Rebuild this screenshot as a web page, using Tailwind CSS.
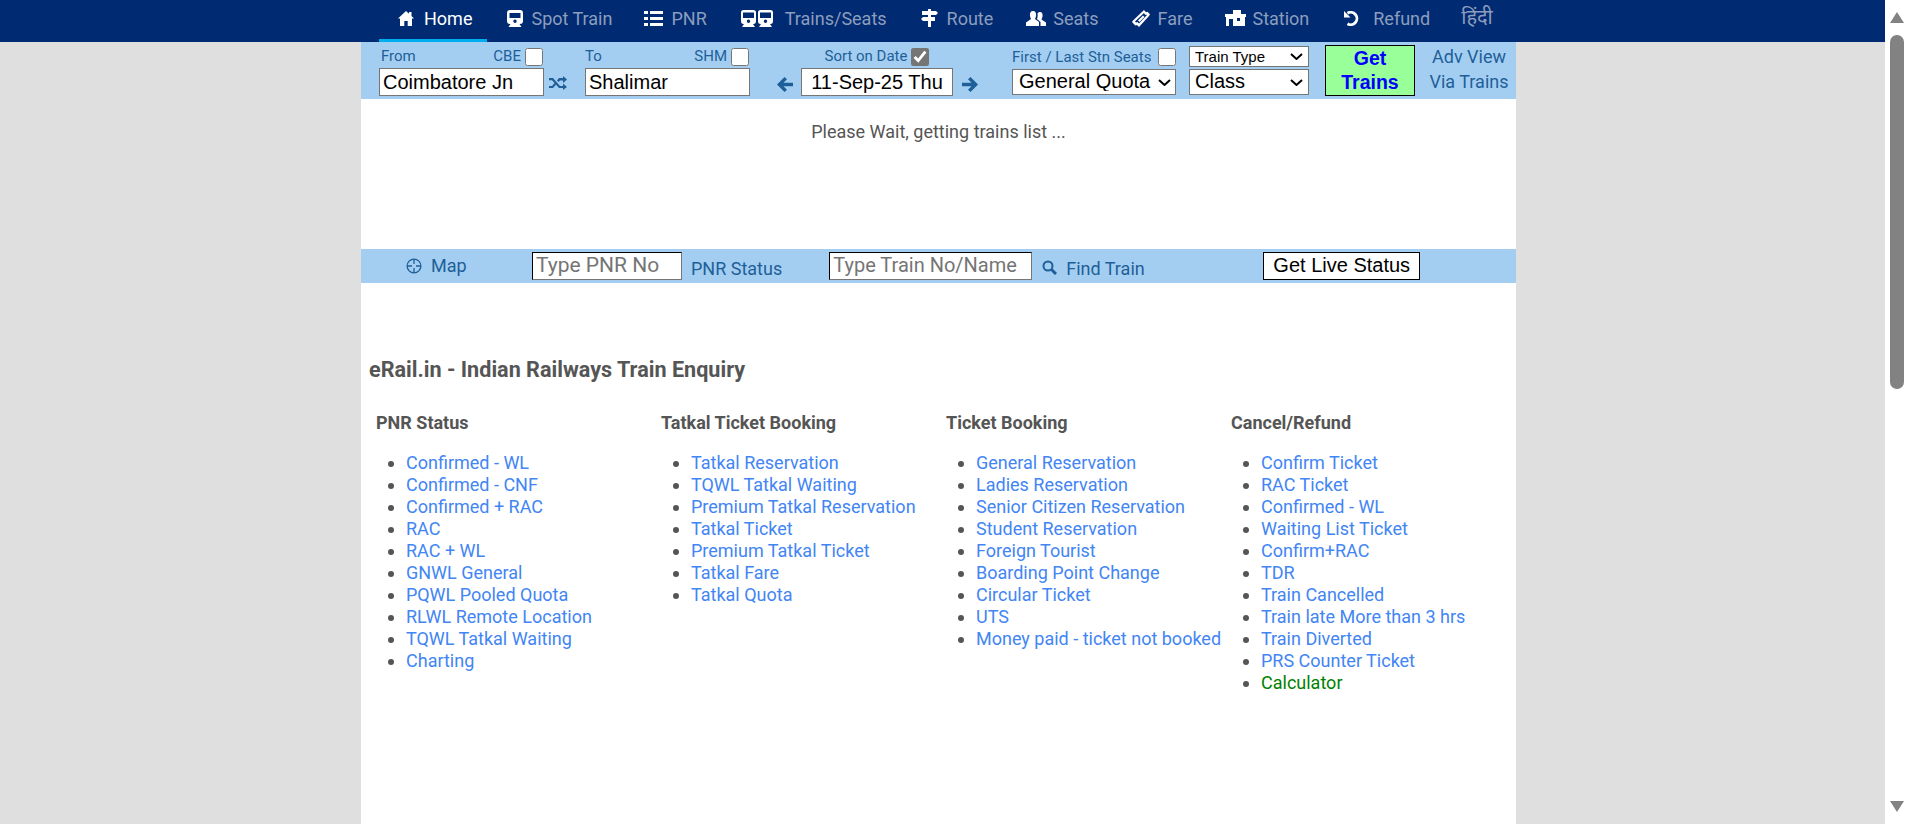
<!DOCTYPE html>
<html lang="en">
  <head>
    <meta charset="UTF-8" />
    <title>eRail.in - Indian Railways Train Enquiry</title>
    <script src="https://cdn.jsdelivr.net/npm/@tailwindcss/browser@4"></script>
  </head>
  <body class="flex h-screen overflow-hidden bg-[#dfdfdf] font-['Roboto',sans-serif] text-[18px] text-[#555555]">
    <div class="w-[1885px] shrink-0">
      <!-- top nav -->
      <nav class="flex h-[42px] bg-[#002b73] pl-[379px] text-[18px] text-[#8d9dbd]">
        <a class="flex h-[42px] items-center gap-[10px] border-b-[3px] border-[#00adef] pb-[3px] pl-[19px] pr-[15px] text-white">
          <svg class="w-[16px] h-[15px]" viewBox="0 0 16 15" fill="#fff"><path d="M8 0 11 2.700V1H13.500V5L16 7.500H14V15H9.700V10H6.300V15H2V7.500H0Z"/></svg>Home</a>
        <a class="flex items-center gap-[8px] pb-[6px] pl-[20px] pr-[15px]">
          <svg class="w-[16px] h-[17px]" viewBox="0 0 16 17" fill="#fff"><path fill-rule="evenodd" d="M3 0H13Q16 0 16 3V11Q16 14 13 14H12.500L14.500 17H1.500L3.500 14H3Q0 14 0 11V3Q0 0 3 0ZM2.500 3V8H13.500V3ZM8 9.500A1.700 1.700 0 1 0 8 12.900 1.700 1.700 0 1 0 8 9.500Z"/></svg>Spot Train</a>
        <a class="flex items-center gap-[8px] pb-[6px] pl-[17px] pr-[17px]">
          <svg class="w-[19px] h-[15px]" viewBox="0 0 19 15" fill="#fff"><path d="M0 0H4V3H0ZM6 0H19V3H6ZM0 6H4V9H0ZM6 6H19V9H6ZM0 12H4V15H0ZM6 12H19V15H6Z"/></svg>PNR</a>
        <a class="flex items-center gap-[12px] pb-[6px] pl-[17px] pr-[17px]">
          <svg class="w-[32px] h-[17px]" viewBox="0 0 32 17" fill="#fff"><path fill-rule="evenodd" d="M2.500 0H12.500Q15 0 15 2.500V11Q15 14 12.500 14H12L14 17H1L3 14H2.500Q0 14 0 11V2.500Q0 0 2.500 0ZM2 2.500V8H13V2.500ZM7.500 9.500A1.700 1.700 0 1 0 7.500 12.900 1.700 1.700 0 1 0 7.500 9.500ZM19.500 0H29.500Q32 0 32 2.500V11Q32 14 29.500 14H29L31 17H18L20 14H19.500Q17 14 17 11V2.500Q17 0 19.500 0ZM19 2.500V8H30V2.500ZM24.500 9.500A1.700 1.700 0 1 0 24.500 12.900 1.700 1.700 0 1 0 24.500 9.500Z"/></svg>Trains/Seats</a>
        <a class="flex items-center gap-[9px] pb-[6px] pl-[17px] pr-[16px]">
          <svg class="w-[17px] h-[18px]" viewBox="0 0 17 18" fill="#fff"><path d="M7 0H10V2H15L17 4 15 6H10V8H14V12H10V18H7V12H2L0 10 2 8H7V6H1V2H7Z"/></svg>Route</a>
        <a class="flex items-center gap-[7px] pb-[6px] pl-[17px] pr-[15px]">
          <svg class="w-[20px] h-[15px]" viewBox="0 0 20 15" fill="#fff"><path d="M7 0C9.500 0 10.500 2 10 5 9.800 6.500 9 7.500 9 8L13 11V15H0V11.500L5 8C5 7.500 4.200 6.500 4 5 3.500 2 4.500 0 7 0ZM14 1C16 1 17 3 16.500 5.500 16.300 7 15.500 8 15.500 8.500L20 11.500V15H14.500V11L11 8C11.500 6.500 12 4 11.500 2.500 12 1.500 13 1 14 1Z"/></svg>Seats</a>
        <a class="flex items-center gap-[8px] pb-[6px] pl-[18px] pr-[16px]">
          <svg class="w-[18px] h-[17px]" viewBox="0 0 18 17" fill="#fff"><path fill-rule="evenodd" d="M12 0 14 2.200 15.500 1.800 18 4.200 17 6 7 17 5 15 3.300 15.500 0 12 1 10.500ZM12 3 3 11.500 4 12.500 5.500 12 7 13.500 15 5 14.500 4.800 13 4.800Z"/><path d="M11 5.500 12.500 7 7.500 12 6 10.500Z"/></svg>Fare</a>
        <a class="flex items-center gap-[6px] pb-[6px] pl-[17px] pr-[16px]">
          <svg class="w-[21px] h-[16px]" viewBox="0 0 21 16" fill="#fff"><path fill-rule="evenodd" d="M8 0H16V4H21V7H20V16H1V7H0V4H8ZM4 9V16H8V9ZM12 8V11H15V8Z"/></svg>Station</a>
        <a class="flex items-center gap-[13px] pb-[6px] pl-[18px] pr-[31px]">
          <svg class="w-[17px] h-[15px]" viewBox="0 0 17 15" fill="none" stroke="#fff" stroke-width="2.800"><path d="M4.500 2.200A6.200 6.200 0 1 1 4.500 12.800"/><path d="M1 0V6.500H7.500" fill="#fff" stroke="none"/></svg>Refund</a>
        <a class="flex items-center pb-[9px] font-['Noto_Sans',sans-serif] text-[20px]">हिंदी</a>
      </nav>

      <main class="ml-[361px] w-[1155px] h-[782px] bg-white">
        <!-- search form -->
        <form class="flex h-[57px] bg-[#a3cef1] text-[15px] text-[#1f5f99]">
          <div class="ml-[18px] w-[165px]">
            <div class="flex h-[26px] items-center justify-between pl-[2px] pr-[1px] pt-[3px]"><span>From</span><span class="flex items-center gap-1">CBE <input type="checkbox" class="w-[18px] h-[18px]" /></span></div>
            <input value="Coimbatore Jn" class="h-[28px] w-[165px] border border-[#767676] bg-white px-[3px] font-['Liberation_Sans',sans-serif] text-[20px] text-black" />
          </div>
          <svg class="ml-[5px] mt-[34px] w-[18px] h-[14px]" viewBox="0 0 18 14" fill="#1f5f99"><path d="M0 2H4L11 10H14V7.500L18 11 14 14V12H10L3 4.300H0ZM0 10H3L6 6.500 7.500 8 4 12H0ZM10 2H14V0L18 3.500 14 7V4.500H11L9.500 6 8 4.500Z"/></svg>
          <div class="ml-[18px] w-[165px]">
            <div class="flex h-[26px] items-center justify-between pr-[1px] pt-[3px]"><span>To</span><span class="flex items-center gap-1">SHM <input type="checkbox" class="w-[18px] h-[18px]" /></span></div>
            <input value="Shalimar" class="h-[28px] w-[165px] border border-[#767676] bg-white px-[3px] font-['Liberation_Sans',sans-serif] text-[20px] text-black" />
          </div>
          <svg class="ml-[27px] mt-[35px] w-[16px] h-[15px]" viewBox="0 0 16 15" fill="#1f5f99"><path d="M7.500 0 10 2.300 6.500 5.700H16V9.300H6.500L10 12.700 7.500 15 0 7.500Z"/></svg>
          <div class="ml-[8px] w-[152px]">
            <div class="flex h-[26px] items-center justify-center gap-1 pt-[3px]"><span>Sort on Date</span><input type="checkbox" checked class="w-[18px] h-[18px] accent-[#757575]" /></div>
            <input value="11-Sep-25 Thu" class="h-[28px] w-[152px] border border-[#767676] bg-white text-center font-['Liberation_Sans',sans-serif] text-[20px] text-black" />
          </div>
          <svg class="ml-[9px] mt-[35px] w-[16px] h-[15px]" viewBox="0 0 16 15" fill="#1f5f99"><path d="M8.500 0 6 2.300 9.500 5.700H0V9.300H9.500L6 12.700 8.500 15 16 7.500Z"/></svg>
          <div class="ml-[34px] w-[164px]">
            <div class="flex h-[27px] items-center justify-between pt-[3px]"><span>First / Last Stn Seats</span><input type="checkbox" class="w-[18px] h-[18px]" /></div>
            <div class="relative">
              <select class="block h-[26px] w-[164px] appearance-none border border-[#767676] bg-white pb-[3px] pl-[6px] font-['Liberation_Sans',sans-serif] text-[20px] leading-[22px] text-black"><option>General Quota</option></select>
              <svg class="pointer-events-none absolute right-[5px] top-[10px] w-[13px] h-[7px]" viewBox="0 0 13 7" fill="none" stroke="#000" stroke-width="2"><path d="M1 1 6.500 6 12 1"/></svg>
            </div>
          </div>
          <div class="ml-[13px] flex w-[120px] flex-col gap-[2px] pt-[4px]">
            <div class="relative">
              <select class="block h-[21px] w-[120px] appearance-none border border-[#767676] bg-white pb-[1px] pl-[5px] font-['Liberation_Sans',sans-serif] text-[15px] leading-[17px] text-black"><option>Train Type</option></select>
              <svg class="pointer-events-none absolute right-[6px] top-[7px] w-[13px] h-[7px]" viewBox="0 0 13 7" fill="none" stroke="#000" stroke-width="2"><path d="M1 1 6.500 6 12 1"/></svg>
            </div>
            <div class="relative">
              <select class="block h-[26px] w-[120px] appearance-none border border-[#767676] bg-white pb-[3px] pl-[5px] font-['Liberation_Sans',sans-serif] text-[20px] leading-[22px] text-black"><option>Class</option></select>
              <svg class="pointer-events-none absolute right-[6px] top-[10px] w-[13px] h-[7px]" viewBox="0 0 13 7" fill="none" stroke="#000" stroke-width="2"><path d="M1 1 6.500 6 12 1"/></svg>
            </div>
          </div>
          <button type="button" class="ml-[16px] mt-[3px] h-[51px] w-[90px] border border-black bg-[#99ff99] pb-[2px] font-['Liberation_Sans',sans-serif] text-[19.5px] leading-[24px] font-bold text-[#0000ff]">Get<br />Trains</button>
          <div class="ml-[15px] flex w-[78px] flex-col items-center whitespace-nowrap pt-[2px] text-[18px] leading-[25px]">
            <div>Adv View</div>
            <div>Via Trains</div>
          </div>
        </form>

        <div class="h-[150px] pt-[21px] text-center text-[18px] leading-[24px]">Please Wait, getting trains list ...</div>

        <!-- quick lookups -->
        <div class="flex h-[34px] bg-[#a3cef1] text-[18px] text-[#1f5f99]">
          <div class="ml-[45px] flex w-[126px] items-center gap-[9px] leading-[24px]">
            <svg class="w-[16px] h-[16px]" viewBox="0 0 16 16" fill="none" stroke="#1f5f99" stroke-width="1.300"><circle cx="8" cy="8" r="6.900"/><path d="M8 1V6M8 10V15M1 8H6M10 8H15"/></svg>Map</div>
          <input placeholder="Type PNR No" class="mt-[3px] h-[28px] w-[150px] border border-[#767676] border-t-black border-l-black bg-white px-[3px] pb-[1px] text-[21px] placeholder:text-[#757575]" />
          <span class="ml-[9px] mt-[8px] leading-[24px]">PNR Status</span>
          <input placeholder="Type Train No/Name" class="ml-[47px] mt-[3px] h-[28px] w-[203px] border border-[#767676] border-t-black border-l-black bg-white px-[3px] pb-[2px] text-[20px] placeholder:text-[#757575]" />
          <svg class="ml-[10px] mt-[11px] w-[15px] h-[15px]" viewBox="0 0 15 15" fill="none" stroke="#1f5f99"><circle cx="6" cy="6" r="4.500" stroke-width="2"/><path d="M9.500 9.500 14 14" stroke-width="3"/></svg>
          <span class="ml-[9px] mt-[8px] w-[197px] leading-[24px]">Find Train</span>
          <button type="button" class="mt-[3px] h-[28px] w-[157px] border border-black bg-white pb-[2px] font-['Liberation_Sans',sans-serif] text-[20px] leading-[22px] text-black">Get Live Status</button>
        </div>

        <h1 class="ml-[8px] mt-[73px] text-[21.6px] leading-[28px] font-bold">eRail.in - Indian Railways Train Enquiry</h1>

        <!-- link columns -->
        <div class="mt-[27px] ml-[15px] grid grid-cols-[285px_285px_285px_285px] text-[#4285f4]">
          <div>
            <h2 class="text-[18px] leading-[24px] font-bold text-[#555555]">PNR Status</h2>
            <ul class="mt-[17px] list-disc pl-[30px] leading-[22px] marker:text-[#555555]">
              <li>Confirmed - WL</li><li>Confirmed - CNF</li><li>Confirmed + RAC</li><li>RAC</li><li>RAC + WL</li><li>GNWL General</li><li>PQWL Pooled Quota</li><li>RLWL Remote Location</li><li>TQWL Tatkal Waiting</li><li>Charting</li>
            </ul>
          </div>
          <div>
            <h2 class="text-[18px] leading-[24px] font-bold text-[#555555]">Tatkal Ticket Booking</h2>
            <ul class="mt-[17px] list-disc pl-[30px] leading-[22px] marker:text-[#555555]">
              <li>Tatkal Reservation</li><li>TQWL Tatkal Waiting</li><li>Premium Tatkal Reservation</li><li>Tatkal Ticket</li><li>Premium Tatkal Ticket</li><li>Tatkal Fare</li><li>Tatkal Quota</li>
            </ul>
          </div>
          <div>
            <h2 class="text-[18px] leading-[24px] font-bold text-[#555555]">Ticket Booking</h2>
            <ul class="mt-[17px] list-disc pl-[30px] leading-[22px] marker:text-[#555555]">
              <li>General Reservation</li><li>Ladies Reservation</li><li>Senior Citizen Reservation</li><li>Student Reservation</li><li>Foreign Tourist</li><li>Boarding Point Change</li><li>Circular Ticket</li><li>UTS</li><li>Money paid - ticket not booked</li>
            </ul>
          </div>
          <div>
            <h2 class="text-[18px] leading-[24px] font-bold text-[#555555]">Cancel/Refund</h2>
            <ul class="mt-[17px] list-disc pl-[30px] leading-[22px] marker:text-[#555555]">
              <li>Confirm Ticket</li><li>RAC Ticket</li><li>Confirmed - WL</li><li>Waiting List Ticket</li><li>Confirm+RAC</li><li>TDR</li><li>Train Cancelled</li><li>Train late More than 3 hrs</li><li>Train Diverted</li><li>PRS Counter Ticket</li><li class="text-[#008000]">Calculator</li>
            </ul>
          </div>
        </div>
      </main>
    </div>

    <!-- scrollbar -->
    <div class="flex h-[824px] w-[23px] flex-col items-center bg-white">
      <svg class="mt-[12px] w-[14px] h-[11px]" viewBox="0 0 14 11" fill="#828282"><path d="M7 0 14 11H0Z"/></svg>
      <div class="mt-[12px] h-[354px] w-[14px] rounded-t-[7px] rounded-b-[7px] bg-[#828282]"></div>
      <svg class="mt-[412px] w-[14px] h-[11px]" viewBox="0 0 14 11" fill="#828282"><path d="M7 11 14 0H0Z"/></svg>
    </div>
  </body>
</html>
